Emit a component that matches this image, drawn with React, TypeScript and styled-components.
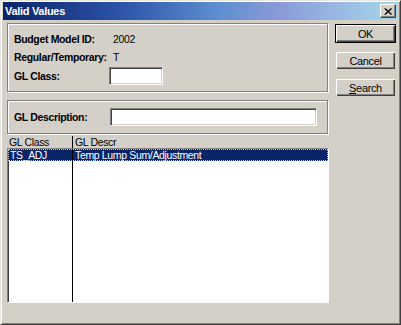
import React from "react";
import styled, {createGlobalStyle} from "styled-components";

const GlobalStyle = createGlobalStyle`
    html, body {
        margin: 0;
        padding: 0;
        background: #d4d0c8;
    }
`;

const Window = styled.div`
    background: #d4d0c8;
    border-bottom: 1px solid #404040;
    border-left: 1px solid #e8e6e2;
    border-right: 1px solid #404040;
    border-top: 1px solid #e8e6e2;
    box-shadow: inset 1px 1px 0 #ffffff, inset -1px -1px 0 #808080;
    box-sizing: border-box;
    display: flex;
    flex-direction: column;
    font-family: "Liberation Sans", Arial, sans-serif;
    font-size: 10.5px;
    letter-spacing: -0.35px;
    height: 325px;
    padding: 1px 2px 0 2px;
    width: 401px;
`;

const TitleBar = styled.div`
    align-items: center;
    background: linear-gradient(to right, #0a246a 0%, #2c54a8 30%, #5f8fd0 55%, #8a9ad8 70%, #a6d8ec 100%);
    display: flex;
    height: 18px;
    justify-content: space-between;
    padding: 0 2px 0 2px;
`;

const Title = styled.span`
    color: #ffffff;
    font-size: 11px;
    font-weight: bold;
    letter-spacing: -0.3px;
`;

const CloseButton = styled.div`
    align-items: center;
    background: #d4d0c8;
    border-bottom: 1px solid #404040;
    border-left: 1px solid #ffffff;
    border-right: 1px solid #404040;
    border-top: 1px solid #ffffff;
    box-shadow: inset -1px -1px 0 #808080;
    box-sizing: border-box;
    display: flex;
    height: 14px;
    justify-content: center;
    width: 16px;
`;

const Body = styled.div`
    display: flex;
    gap: 5px;
    padding: 3px 0 0 4px;
`;

const LeftColumn = styled.div`
    display: flex;
    flex-direction: column;
    width: 322px;
`;

const GroupBox = styled.div<{$height: number; $gapAbove?: number}>`
    border: 1px solid #808080;
    box-shadow: 1px 1px 0 #ffffff, inset 1px 1px 0 #ffffff;
    box-sizing: border-box;
    display: flex;
    flex-direction: column;
    height: ${(p) => p.$height}px;
    justify-content: center;
    margin-top: ${(p) => p.$gapAbove ?? 0}px;
    padding: 0 0 0 6px;
    width: 321px;
`;

const FieldGrid = styled.div`
    display: grid;
    grid-template-columns: 95px 1fr;
`;

const FieldRow = styled.div<{$height: number}>`
    display: contents;
    & > * {
        align-items: center;
        display: flex;
        height: ${(p) => p.$height}px;
    }
`;

const Label = styled.span<{$width?: number}>`
    color: #000000;
    flex-shrink: 0;
    font-weight: bold;
    width: ${(p) => (p.$width ? `${p.$width}px` : "auto")};
`;

const Value = styled.span`
    color: #000000;
    padding-left: 4px;
`;

const TextInput = styled.div<{$width: number}>`
    background: #ffffff;
    border-bottom: 1px solid #ffffff;
    border-left: 1px solid #808080;
    border-right: 1px solid #ffffff;
    border-top: 1px solid #808080;
    box-shadow: inset 1px 1px 0 #404040, inset -1px -1px 0 #d4d0c8;
    box-sizing: border-box;
    height: 18px;
    width: ${(p) => p.$width}px;
`;

const DescRow = styled.div`
    align-items: center;
    display: flex;
`;

const ListHeader = styled.div`
    display: grid;
    grid-template-columns: 66px 1fr;
    height: 12px;
    margin-top: 2px;
`;

const HeaderCell = styled.div<{$divider?: boolean}>`
    align-items: flex-end;
    border-right: ${(p) => (p.$divider ? "1px solid #000000" : "none")};
    color: #000000;
    display: flex;
    line-height: 11px;
    padding-left: 2px;
`;

const ListBox = styled.div`
    background: #ffffff;
    border-bottom: 1px solid #ffffff;
    border-left: 1px solid #808080;
    border-right: 1px solid #ffffff;
    border-top: 1px solid #808080;
    box-shadow: inset 1px 0 0 #404040;
    box-sizing: border-box;
    display: flex;
    flex-direction: column;
    height: 155px;
    width: 322px;
`;

const ListRow = styled.div<{$selected?: boolean}>`
    background: ${(p) => (p.$selected ? "#0a246a" : "transparent")};
    color: ${(p) => (p.$selected ? "#ffffff" : "#000000")};
    display: grid;
    grid-template-columns: 65px 1fr;
    height: 12px;
    outline: ${(p) => (p.$selected ? "1px dotted #c8c8c8" : "none")};
    outline-offset: -1px;
`;

const ListFiller = styled.div`
    display: grid;
    flex: 1;
    grid-template-columns: 65px 1fr;
`;

const Cell = styled.div<{$divider?: boolean}>`
    border-right: ${(p) => (p.$divider ? "1px solid #000000" : "none")};
    line-height: 12px;
    padding-left: 2px;
    white-space: nowrap;
`;

const ButtonColumn = styled.div`
    display: flex;
    flex-direction: column;
    gap: 8px;
    padding: 1px 0 0 1px;
`;

const Button = styled.div<{$default?: boolean}>`
    align-items: center;
    background: #d4d0c8;
    border: 1px solid ${(p) => (p.$default ? "#000000" : "transparent")};
    box-shadow: inset 1px 1px 0 #ffffff, inset -1px -1px 0 #404040,
        inset -2px -2px 0 #808080;
    box-sizing: border-box;
    color: #000000;
    display: flex;
    font-size: 11px;
    height: 19px;
    justify-content: center;
    width: 61px;
`;

const Mnemonic = styled.span`
    text-decoration: underline;
`;

export default function App() {
    return (
        <>
            <GlobalStyle />
            <Window>
                <TitleBar>
                    <Title>Valid Values</Title>
                    <CloseButton>
                        <svg width="8" height="7" viewBox="0 0 8 7">
                            <path d="M0.5 0.5 L7 6.5 M1.5 0.5 L8 6.5 M7 0.5 L0.5 6.5 M8 0.5 L1.5 6.5" stroke="#000" strokeWidth="1" />
                        </svg>
                    </CloseButton>
                </TitleBar>
                <Body>
                    <LeftColumn>
                        <GroupBox $height={69}>
                            <FieldGrid>
                                <FieldRow $height={18}>
                                    <Label>Budget Model ID:</Label>
                                    <Value>2002</Value>
                                </FieldRow>
                                <FieldRow $height={18}>
                                    <Label>Regular/Temporary:</Label>
                                    <Value>T</Value>
                                </FieldRow>
                                <FieldRow $height={19}>
                                    <Label>GL Class:</Label>
                                    <div>
                                        <TextInput $width={54} />
                                    </div>
                                </FieldRow>
                            </FieldGrid>
                        </GroupBox>
                        <GroupBox $height={34} $gapAbove={8}>
                            <DescRow>
                                <Label $width={96}>GL Description:</Label>
                                <TextInput $width={207} />
                            </DescRow>
                        </GroupBox>
                        <ListHeader>
                            <HeaderCell $divider>GL Class</HeaderCell>
                            <HeaderCell>GL Descr</HeaderCell>
                        </ListHeader>
                        <ListBox>
                            <ListRow $selected>
                                <Cell $divider>TS_ADJ</Cell>
                                <Cell>Temp Lump Sum/Adjustment</Cell>
                            </ListRow>
                            <ListFiller>
                                <Cell $divider />
                                <Cell />
                            </ListFiller>
                        </ListBox>
                    </LeftColumn>
                    <ButtonColumn>
                        <Button $default>OK</Button>
                        <Button>Cancel</Button>
                        <Button>
                            <span>
                                <Mnemonic>S</Mnemonic>earch
                            </span>
                        </Button>
                    </ButtonColumn>
                </Body>
            </Window>
        </>
    );
}
